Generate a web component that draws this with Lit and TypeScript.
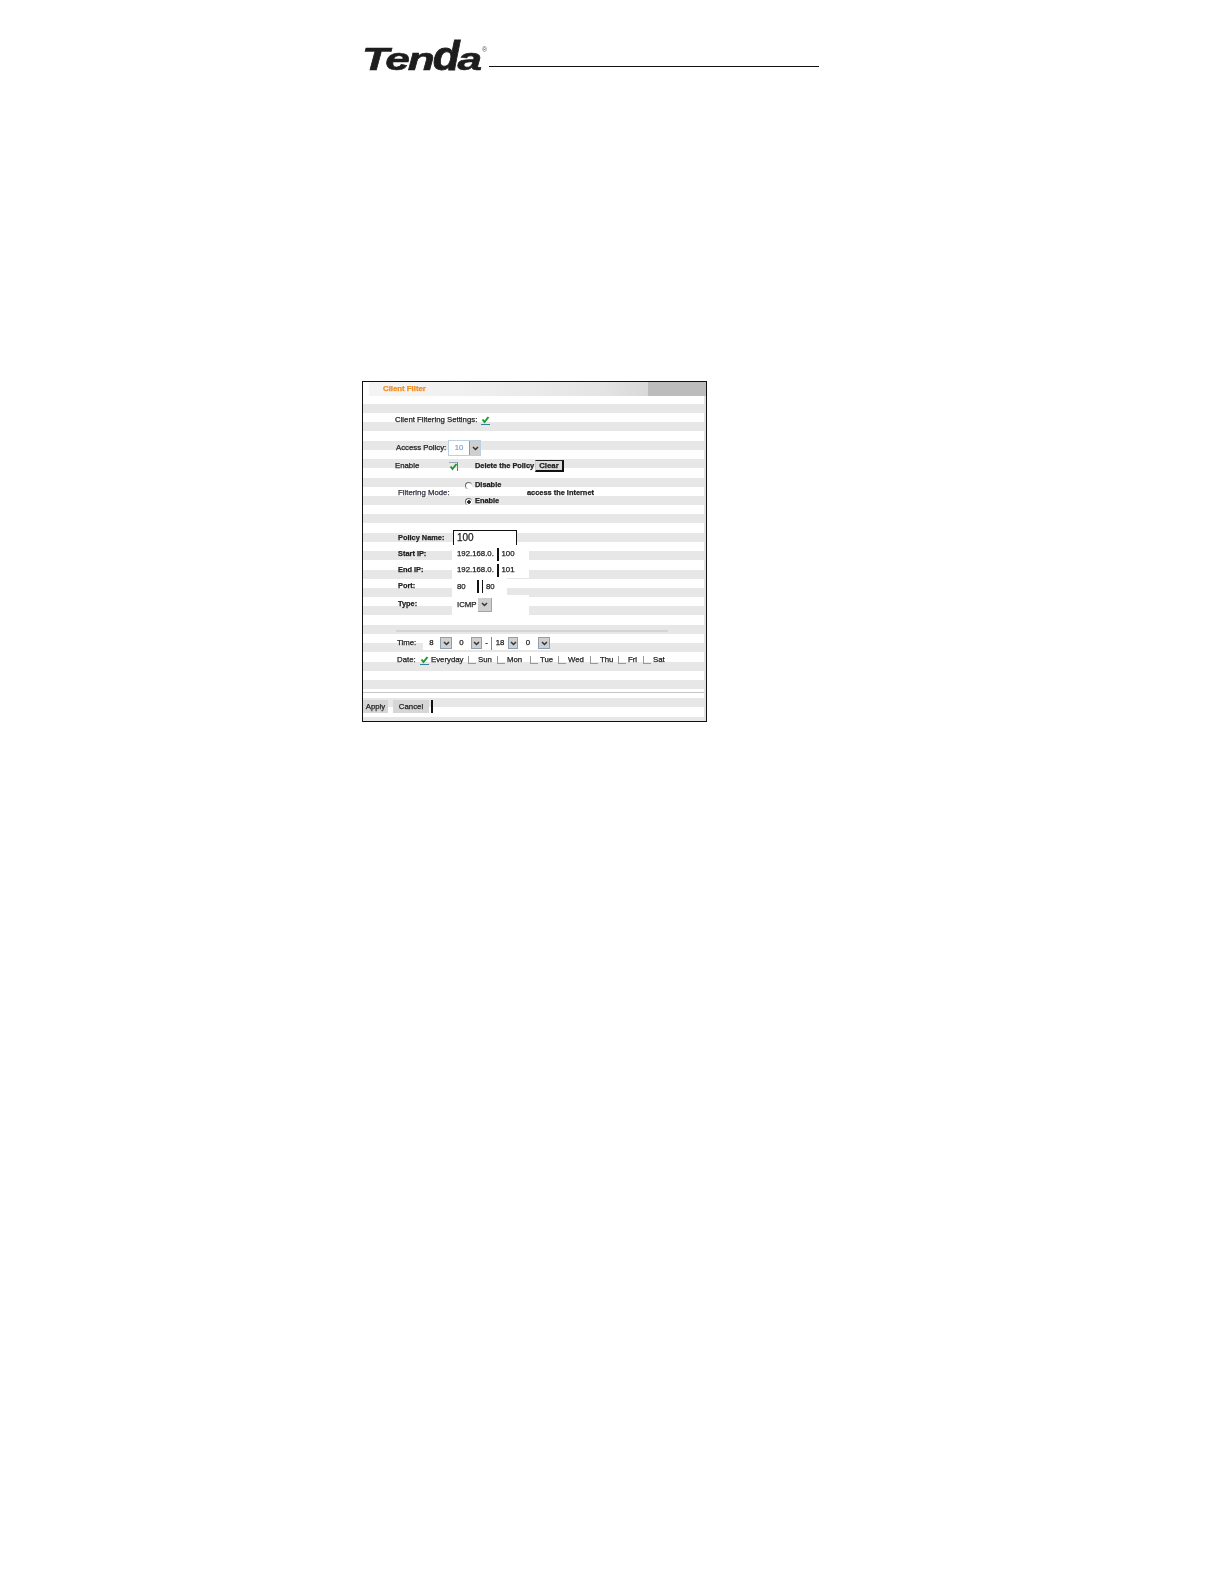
import { LitElement, html, css } from "lit";
import { customElement } from "lit/decorators.js";

const days: string[] = ["Sun", "Mon", "Tue", "Wed", "Thu", "Fri", "Sat"];

@customElement("app-root")
export class AppRoot extends LitElement {
  static styles = css`
    :host { display: block; width: 1224px; height: 1584px; background: #fff; overflow: hidden; font-family: "Liberation Sans", Arial, sans-serif; color: #222; }
    .page { padding: 35px 0 0 362px; }
    .brand { display: flex; align-items: flex-end; height: 36px; }
    .logo { width: 127px; height: 36px; position: relative; flex: none; filter: blur(.5px); }
    .logo .word { display: block; font: italic 700 32px/36px "Liberation Sans", Arial, sans-serif; color: #1d1d1d; letter-spacing: -1.5px; transform: scaleX(1.38); transform-origin: 0 0; -webkit-text-stroke: .6px #1d1d1d; margin-top: 6px; white-space: nowrap; }
    .logo .d { display: inline-block; transform: scaleY(1.26); transform-origin: 0 29px; }
    .logo sup { position: absolute; left: 120px; top: 11px; font-size: 7px; line-height: 7px; color: #555; }
    .rule { flex: none; width: 330px; height: 1.3px; background: #111; margin-bottom: 4px; }

    .panel { box-sizing: border-box; width: 345px; height: 341px; margin-top: 310px; border: 1px solid #111; border-right-width: 1.5px; background: #fff; overflow: hidden; font-size: 7.8px; line-height: 14px; }
    .inner { filter: blur(.72px); height: 100%; -webkit-text-stroke: .25px #222; }
    .head { height: 14px; background: linear-gradient(90deg, #fff 0 1.5%, #f4f4f4 2%, #f0f0f0 30%, #e4e4e4 70%, #d8d8d8 83%, #bcbcbc 83.2%, #bcbcbc 100%); padding-left: 20px; color: #f28c20; -webkit-text-stroke: .25px #f28c20; font-weight: 700; line-height: 14px; }
    .body { height: 325px; display: flex; flex-direction: column; background: repeating-linear-gradient(180deg, #fff 0 8px, #e7e7e7 8px 17px, #fff 17px 18.4px); border-right: 2px solid #e2e2e2; }
    .row { display: flex; align-items: center; height: 14px; padding-left: 32px; white-space: nowrap; flex: none; }
    .r1 { margin-top: 17px; }
    .r2 { margin-top: 13px; height: 16px; padding-left: 33px; }
    .r3 { margin-top: 4px; height: 12px; }
    .lab { flex: none; width: 52px; }
    .chk { flex: none; width: 9px; height: 9px; border-bottom: 1.5px solid #3a7f9a; box-sizing: border-box; }
    .chk.side { border-bottom: 0; border-right: 1.5px solid #5a7f8a; border-top: 1px solid #9ab; }
    .r1 .chk { margin-left: 4px; }
    .sel { flex: none; display: flex; height: 16px; background: #fff; box-sizing: border-box; border: 1px solid #bcd0e2; }
    .sel b { font-weight: 400; flex: 1; text-align: center; line-height: 14px; }
    .sel i { flex: none; width: 10px; background: #cfcfcf; color: #333; display: flex; align-items: center; justify-content: center; border-left: 1px solid #8c9cae; }
    svg { display: block; }
    .policy { width: 33px; color: #7aa6c8; -webkit-text-stroke: .2px #7aa6c8; }
    .r3 .lab { width: 54px; }
    .del { margin-left: 17px; width: 60px; flex: none; overflow: hidden; font-weight: 700; font-size: 7.4px; }
    .clear { flex: none; width: 29px; height: 12px; box-sizing: border-box; background: #dcdcdc; border: 1px solid #ccc; border-right: 2px solid #111; border-bottom: 2px solid #111; border-top: 1.5px solid #222; text-align: center; line-height: 9px; font-weight: 700; }
    .mode { margin-top: 9px; height: 24px; padding-left: 35px; display: grid; grid-template-columns: 67px 62px auto; grid-template-rows: repeat(3, 8px); align-items: center; white-space: nowrap; flex: none; }
    .opt { grid-column: 2; display: flex; align-items: center; gap: 3px; font-weight: 700; font-size: 7.4px; }
    .m-lab { grid-column: 1; grid-row: 2; color: #446; }
    .m-txt { grid-column: 3; grid-row: 2; font-weight: 700; font-size: 7.4px; }
    .radio { flex: none; width: 7px; height: 7px; border-radius: 50%; border-top: 1px solid #666; border-left: 1px solid #666; box-sizing: border-box; background: #fff; }
    .radio.on { background: radial-gradient(circle, #222 0 1.5px, #fff 2px); }
    .form { margin-top: 25px; padding-left: 35px; display: grid; grid-template-columns: 54px 77px; grid-template-rows: 16px 16px 16px 17px 21px; align-items: stretch; flex: none; }
    .form .l { line-height: 16px; white-space: nowrap; font-weight: 700; font-size: 7.4px; }
    .form .l.t { line-height: 18px; }
    .form .f { background: #fff; display: flex; align-items: center; padding-left: 5px; box-sizing: border-box; white-space: nowrap; }
    .form .f.name { background: none; padding: 0; align-items: flex-start; }
    .name span { display: block; box-sizing: border-box; width: 64px; height: 15px; margin-left: 1px; border: 1.5px solid #111; border-bottom: 0; background: #fff; padding-left: 3px; font-size: 10px; line-height: 14px; }
    .form .f.short { margin-right: 22px; }
    .ip { flex: none; width: 40px; overflow: hidden; }
    .bar { flex: none; width: 1.5px; height: 13px; background: #111; margin-right: 3px; }
    .gap { flex: none; width: 20px; }
    .form .type { align-items: flex-start; padding-top: 3px; }
    .tv { flex: none; width: 21px; }
    .arrow { flex: none; width: 14px; height: 14px; background: #cfcfcf; border-right: 1px solid #8fa8c0; border-bottom: 1px solid #8fa8c0; box-sizing: border-box; display: flex; align-items: center; justify-content: center; }
    .hr1 { flex: none; margin: 14px 0 0 33px; width: 272px; height: 2px; background: #d4d4d4; }
    .time { margin-top: 4px; padding-left: 34px; }
    .lab2 { flex: none; width: 26px; }
    .times { display: flex; align-items: center; background: #fff; height: 14px; }
    .v { flex: none; text-align: center; }
    .a { flex: none; height: 12px; background: #d0d0d0; border: 1px solid #8fa0b0; box-sizing: border-box; display: flex; align-items: center; justify-content: center; }
    .v1 { width: 17px; } .a1 { width: 12px; }
    .v2 { width: 19px; } .a2 { width: 11px; }
    .dash { flex: none; width: 9px; text-align: center; }
    .blue { flex: none; width: 1px; height: 13px; background: #5d8fc0; }
    .v3 { width: 16px; } .a3 { width: 10px; }
    .v4 { width: 20px; } .a4 { width: 12px; }
    .date { margin-top: 3px; display: grid; grid-template-columns: 23px 48px 29px 33px 28px 32px 28px 25px 30px; padding-left: 34px; height: 14px; align-items: center; white-space: nowrap; flex: none; }
    .cell { display: flex; align-items: center; gap: 2px; }
    .box { flex: none; width: 8px; height: 8px; border-left: 1px solid #999; border-bottom: 1px solid #999; box-sizing: border-box; }
    .hr2 { flex: none; margin-top: 25px; height: 1px; background: #c6c6c6; }
    .btns { flex: none; margin-top: 7px; display: flex; height: 13px; line-height: 13px; }
    .btn { flex: none; background: #d6d6d6; text-align: center; }
    .apply { width: 25px; }
    .cancel { width: 36px; margin-left: 5px; }
    .end { flex: none; width: 1.5px; background: #111; margin-left: 2px; }
  `;

  private arrow() {
    return html`<svg width="7" height="5" viewBox="0 0 7 5"><path d="M1 1l2.5 2.5L6 1" fill="none" stroke="#333" stroke-width="1.5"/></svg>`;
  }

  private check() {
    return html`<svg width="9" height="8" viewBox="0 0 9 8"><path d="M1.5 3.5l2 2.5L7.5 1" fill="none" stroke="#1f9a35" stroke-width="2"/></svg>`;
  }

  render() {
    return html`
      <div class="page">
        <div class="brand">
          <div class="logo"><span class="word">Ten<span class="d">d</span>a</span><sup>®</sup></div>
          <div class="rule"></div>
        </div>
        <div class="panel"><div class="inner">
          <div class="head">Client Filter</div>
          <div class="body">
            <div class="row r1"><span>Client Filtering Settings:</span><span class="chk">${this.check()}</span></div>
            <div class="row r2"><span class="lab">Access Policy:</span><span class="sel policy"><b>10</b><i>${this.arrow()}</i></span></div>
            <div class="row r3"><span class="lab">Enable</span><span class="chk side">${this.check()}</span><span class="del">Delete the Policy</span><span class="clear">Clear</span></div>
            <div class="mode">
              <span class="opt" style="grid-row:1"><span class="radio"></span>Disable</span>
              <span class="m-lab">Filtering Mode:</span>
              <span class="m-txt">access the internet</span>
              <span class="opt" style="grid-row:3"><span class="radio on"></span>Enable</span>
            </div>
            <div class="form">
              <span class="l">Policy Name:</span><span class="f name"><span>100</span></span>
              <span class="l">Start IP:</span><span class="f"><span class="ip">192.168.0.</span><span class="bar"></span><span>100</span></span>
              <span class="l">End IP:</span><span class="f"><span class="ip">192.168.0.</span><span class="bar"></span><span>101</span></span>
              <span class="l">Port:</span><span class="f short"><span class="gap">80</span><span class="bar"></span><span class="bar"></span><span>80</span></span>
              <span class="l t">Type:</span><span class="f type"><span class="tv">ICMP</span><span class="arrow">${this.arrow()}</span></span>
            </div>
            <div class="hr1"></div>
            <div class="row time">
              <span class="lab2">Time:</span>
              <span class="times">
                <span class="v v1">8</span><span class="a a1">${this.arrow()}</span>
                <span class="v v2">0</span><span class="a a2">${this.arrow()}</span>
                <span class="dash">-</span><span class="blue"></span>
                <span class="v v3">18</span><span class="a a3">${this.arrow()}</span>
                <span class="v v4">0</span><span class="a a4">${this.arrow()}</span>
              </span>
            </div>
            <div class="date">
              <span>Date:</span>
              <span class="cell"><span class="chk">${this.check()}</span>Everyday</span>
              ${days.map((d) => html`<span class="cell"><span class="box"></span>${d}</span>`)}
            </div>
            <div class="hr2"></div>
            <div class="btns">
              <span class="btn apply">Apply</span>
              <span class="btn cancel">Cancel</span>
              <span class="end"></span>
            </div>
          </div>
        </div></div>
      </div>
    `;
  }
}
